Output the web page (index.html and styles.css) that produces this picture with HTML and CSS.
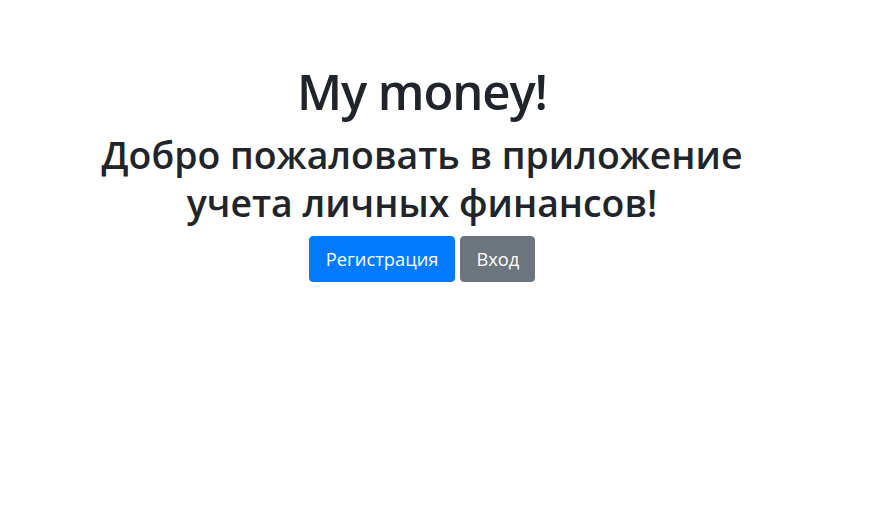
FILE: index.html
```html
<!DOCTYPE html>
<html lang="ru">
<head>
<meta charset="utf-8">
<title>My money!</title>
<link rel="stylesheet" href="styles.css">
</head>
<body>
<main class="page">
  <h1 class="title">My money!</h1>
  <h2 class="subtitle">Добро пожаловать в приложение учета личных финансов!</h2>
  <div class="actions">
    <a class="btn btn-primary" href="#">Регистрация</a>
    <a class="btn btn-secondary" href="#">Вход</a>
  </div>
</main>
</body>
</html>
```
FILE: styles.css
```css
html, body {
  margin: 0;
  padding: 0;
  background: #fff;
}
body {
  font-family: "Open Sans", "Noto Sans", sans-serif;
  color: #212529;
}
.page {
  padding: 62px 27px 0 0;
  text-align: center;
}
.title {
  margin: 0 0 11px;
  font-size: 49px;
  font-weight: 600;
  line-height: 58px;
  letter-spacing: -1.1px;
}
.subtitle {
  margin: 0 auto 9px;
  max-width: 680px;
  font-size: 37.4px;
  font-weight: 600;
  line-height: 48px;
}
.actions {
  display: flex;
  justify-content: center;
  gap: 5px;
}
.btn {
  display: inline-block;
  padding: 0 16px;
  height: 46px;
  line-height: 44px;
  box-sizing: border-box;
  border: 1px solid transparent;
  border-radius: 4px;
  font-size: 18.3px;
  color: #fff;
  text-decoration: none;
}
.btn-primary {
  background: #007bff;
  border-color: #007bff;
}
.btn-secondary {
  padding: 0 15px;
  background: #6c757d;
  border-color: #6c757d;
}
```
